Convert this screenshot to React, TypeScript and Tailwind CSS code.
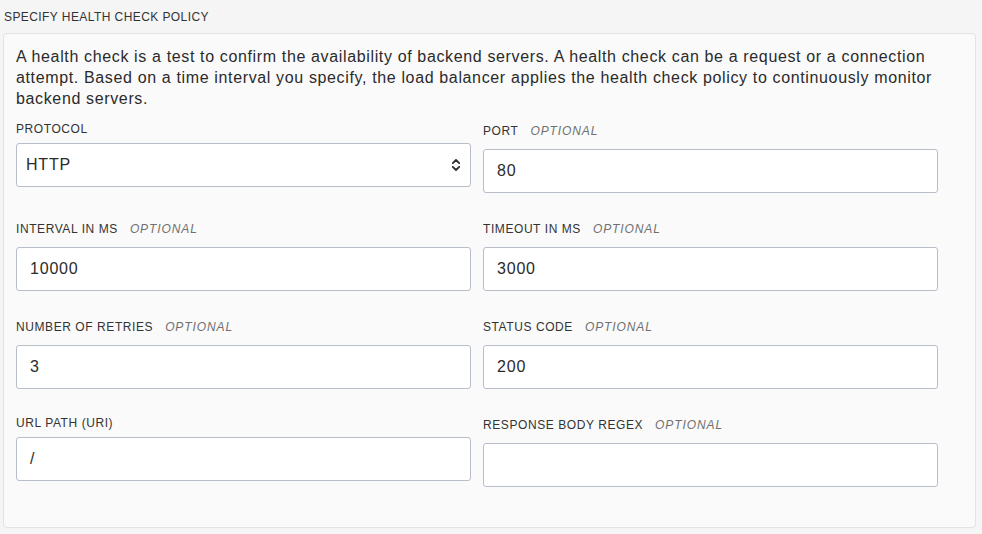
import type { ReactNode } from "react";

type Field = {
  label: string;
  optional?: boolean;
  value: string;
  select?: boolean;
};

const fields: Field[] = [
  { label: "PROTOCOL", value: "HTTP", select: true },
  { label: "PORT", optional: true, value: "80" },
  { label: "INTERVAL IN MS", optional: true, value: "10000" },
  { label: "TIMEOUT IN MS", optional: true, value: "3000" },
  { label: "NUMBER OF RETRIES", optional: true, value: "3" },
  { label: "STATUS CODE", optional: true, value: "200" },
  { label: "URL PATH (URI)", value: "/" },
  { label: "RESPONSE BODY REGEX", optional: true, value: "" }
];

function SelectArrows() {
  return (
    <svg width="10" height="16" viewBox="0 0 10 16" fill="none" aria-hidden="true">
      <path d="M1.8 6.2 L5 3 L8.2 6.2" stroke="#2f2f2f" strokeWidth="1.8" strokeLinecap="round" strokeLinejoin="round" />
      <path d="M1.8 9.8 L5 13 L8.2 9.8" stroke="#2f2f2f" strokeWidth="1.8" strokeLinecap="round" strokeLinejoin="round" />
    </svg>
  );
}

function FieldLabel({ field }: { field: Field }) {
  return (
    <div
      className={
        field.optional
          ? "flex h-[22px] mb-[7px] items-center text-[12px] tracking-[0.048em] text-[#333333]"
          : "flex h-[18px] mb-[5px] items-center text-[12px] tracking-[0.048em] text-[#333333]"
      }
    >
      <span>{field.label}</span>
      {field.optional ? <span className="ml-[12px] italic tracking-[0.075em] text-[#707070]">OPTIONAL</span> : null}
    </div>
  );
}

function Box({ children, select }: { children: ReactNode; select?: boolean }) {
  return (
    <div
      className={`flex h-11 items-center justify-between rounded-[3px] border border-[#b8bec8] bg-white text-[16px] text-[#2b2b2b] ${
        select ? "pl-[9px] pr-[9px]" : "pl-[13px] pr-3"
      }`}
    >
      <span>{children}</span>
      {select ? <SelectArrows /> : null}
    </div>
  );
}

export default function App() {
  return (
    <div className="min-h-[534px] w-[982px] bg-[#f5f5f5] font-['Liberation_Sans',Arial,sans-serif] tracking-wider">
      <div className="px-1 pt-[9px] text-[12px] leading-4 tracking-[0.035em] text-[#333333]">SPECIFY HEALTH CHECK POLICY</div>

      <section className="mx-[3px] mt-2 w-[973px] rounded-[4px] border border-[#e3e3e3] bg-[#fafafa] pb-10 pl-3 pr-[38px] pt-3">
        <p className="mb-[11px] text-[16px] leading-[21px] tracking-[0.04em] text-[#2b2b2b]">
          A health check is a test to confirm the availability of backend servers. A health check can be a request or a connection
          attempt. Based on a time interval you specify, the load balancer applies the health check policy to continuously monitor
          backend servers.
        </p>

        <div className="grid grid-cols-[455px_455px] items-start gap-x-3 gap-y-[25px]">
          {fields.map((field) => (
            <div key={field.label}>
              <FieldLabel field={field} />
              <Box select={field.select}>{field.value}</Box>
            </div>
          ))}
        </div>
      </section>
    </div>
  );
}
